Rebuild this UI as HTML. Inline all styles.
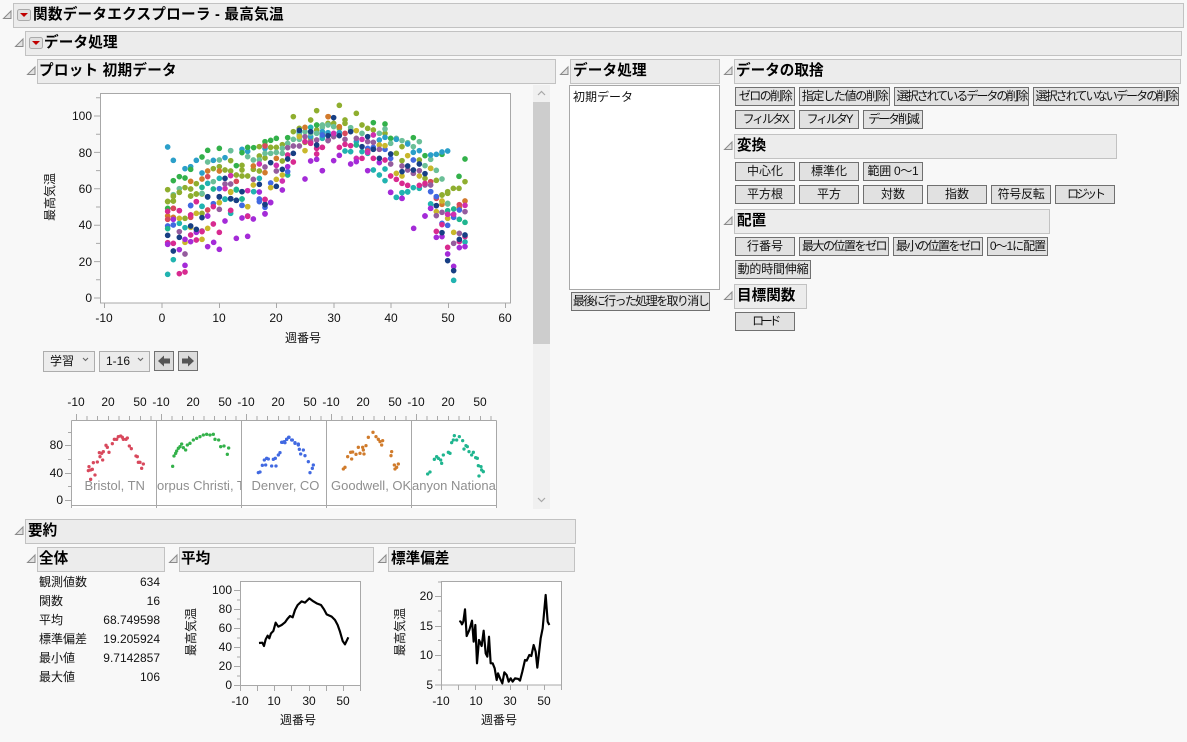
<!DOCTYPE html>
<html lang="ja"><head><meta charset="utf-8"><title>関数データエクスプローラ</title>
<style>
html,body{margin:0;padding:0}
body{width:1187px;height:742px;overflow:hidden;background:#f8f8f8;position:relative;font-family:"Liberation Sans","Noto Sans CJK JP",sans-serif;color:#111}
.h,.b,.x,.tx{position:absolute;box-sizing:border-box;white-space:nowrap}
.h{background:#ececec;border:1px solid #c2c2c2;font-weight:bold;font-size:14.6px;line-height:22px;padding-left:1px;height:25px;color:#000}
.b{background:#e1e1e1;border:1px solid #707070;font-size:12px;line-height:16px;height:19px;text-align:center;overflow:hidden}
.tx{font-size:12px;line-height:16px}
.x{background:#ececec;border:1px solid #adadad;font-size:12px;line-height:18px;height:21px;padding-left:6px}
svg{position:absolute;left:0;top:0}
svg text{font-family:"Liberation Sans","Noto Sans CJK JP",sans-serif;font-size:12px;fill:#111}
svg text.l{font-size:13px;fill:#8f8f8f}
.d{fill:none;stroke-linecap:round;stroke-width:17}
.s{fill:none;stroke-linecap:round;stroke-width:10}
.gl{fill:none;stroke:#a8a8a8;stroke-width:1}
</style></head><body>

<div class="h" style="left:13px;top:3px;width:1171px;padding-left:19px;letter-spacing:.25px">関数データエクスプローラ - 最高気温</div>
<div class="h" style="left:25px;top:31px;width:1157px;padding-left:18px;letter-spacing:.15px">データ処理</div>
<div class="h" style="left:37px;top:59px;width:519px;letter-spacing:.25px">プロット 初期データ</div>
<div class="h" style="left:570px;top:59px;width:150px;padding-left:2px;letter-spacing:.15px">データ処理</div>
<div class="h" style="left:734px;top:59px;width:447px">データの取捨</div>
<div class="h" style="left:734px;top:134px;width:383px;padding-left:2px">変換</div>
<div class="h" style="left:734px;top:209px;width:316px;padding-left:2px">配置</div>
<div class="h" style="left:734px;top:284px;width:73px;padding-left:2px">目標関数</div>
<div class="h" style="left:25px;top:519px;width:551px;padding-left:2px">要約</div>
<div class="h" style="left:37px;top:547px;width:128px">全体</div>
<div class="h" style="left:179px;top:547px;width:195px">平均</div>
<div class="h" style="left:388px;top:547px;width:187px;padding-left:2px">標準偏差</div>

<div class="b" style="left:735px;top:87px;width:60px;letter-spacing:-1.5px">ゼロの削除</div>
<div class="b" style="left:799px;top:87px;width:91px;letter-spacing:-1.3px">指定した値の削除</div>
<div class="b" style="left:894px;top:87px;width:135px;letter-spacing:-2px">選択されているデータの削除</div>
<div class="b" style="left:1033px;top:87px;width:146px;letter-spacing:-1.9px">選択されていないデータの削除</div>
<div class="b" style="left:735px;top:110px;width:60px;letter-spacing:-2.2px">フィルタX</div>
<div class="b" style="left:799px;top:110px;width:60px;letter-spacing:-2.2px">フィルタY</div>
<div class="b" style="left:863px;top:110px;width:60px;letter-spacing:-2.1px">データ削減</div>
<div class="b" style="left:735px;top:162px;width:60px">中心化</div>
<div class="b" style="left:799px;top:162px;width:60px">標準化</div>
<div class="b" style="left:863px;top:162px;width:60px;letter-spacing:-.3px">範囲 0～1</div>
<div class="b" style="left:735px;top:185px;width:60px">平方根</div>
<div class="b" style="left:799px;top:185px;width:60px">平方</div>
<div class="b" style="left:863px;top:185px;width:60px">対数</div>
<div class="b" style="left:927px;top:185px;width:60px">指数</div>
<div class="b" style="left:991px;top:185px;width:60px;letter-spacing:-.3px">符号反転</div>
<div class="b" style="left:1055px;top:185px;width:60px;letter-spacing:-3px">ロジット</div>
<div class="b" style="left:735px;top:237px;width:60px">行番号</div>
<div class="b" style="left:799px;top:237px;width:90px;letter-spacing:-1.5px">最大の位置をゼロ</div>
<div class="b" style="left:893px;top:237px;width:90px;letter-spacing:-1.5px">最小の位置をゼロ</div>
<div class="b" style="left:987px;top:237px;width:61px;letter-spacing:-1px">0～1に配置</div>
<div class="b" style="left:735px;top:260px;width:76px;letter-spacing:-.2px">動的時間伸縮</div>
<div class="b" style="left:735px;top:312px;width:60px;letter-spacing:-3.4px">ロード</div>
<div class="b" style="left:571px;top:292px;width:139px;letter-spacing:-1.6px">最後に行った処理を取り消し</div>

<div class="x" style="left:43px;top:351px;width:52px">学習</div>
<div class="x" style="left:99px;top:351px;width:51px">1-16</div>

<div class="tx" style="left:39px;top:574px">観測値数</div><div class="tx" style="left:100px;width:60px;top:574px;text-align:right">634</div>
<div class="tx" style="left:39px;top:593px">関数</div><div class="tx" style="left:100px;width:60px;top:593px;text-align:right">16</div>
<div class="tx" style="left:39px;top:612px">平均</div><div class="tx" style="left:100px;width:60px;top:612px;text-align:right">68.749598</div>
<div class="tx" style="left:39px;top:631px">標準偏差</div><div class="tx" style="left:100px;width:60px;top:631px;text-align:right">19.205924</div>
<div class="tx" style="left:39px;top:650px">最小値</div><div class="tx" style="left:100px;width:60px;top:650px;text-align:right">9.7142857</div>
<div class="tx" style="left:39px;top:669px">最大値</div><div class="tx" style="left:100px;width:60px;top:669px;text-align:right">106</div>

<svg width="1187" height="742" viewBox="0 0 1187 742">
<g fill="#e2e2e2" stroke="#8a8a8a" stroke-width="1">
<path d="M3.5 18.5H11V11Z"/><path d="M15.5 46.5H23V39Z"/><path d="M27.5 74.5H35V67Z"/>
<path d="M560.5 74.5H568V67Z"/><path d="M724.5 74.5H732V67Z"/><path d="M724.5 149.5H732V142Z"/>
<path d="M724.5 224.5H732V217Z"/><path d="M724.5 299.5H732V292Z"/><path d="M15.5 534.5H23V527Z"/>
<path d="M27.5 562.5H35V555Z"/><path d="M169.5 562.5H177V555Z"/><path d="M378.5 562.5H386V555Z"/>
</g>
<rect x="17.5" y="9.5" width="13" height="11" rx="2" fill="#e0e0e0" stroke="#aaa"/><path d="M20 13h8l-4 4z" fill="#c00000"/>
<rect x="29.5" y="37.5" width="13" height="11" rx="2" fill="#e0e0e0" stroke="#aaa"/><path d="M32 41h8l-4 4z" fill="#c00000"/>

<rect x="533" y="85" width="17" height="424" fill="#f0f0f0"/>
<rect x="533" y="102" width="17" height="242" fill="#cdcdcd"/>
<path d="M538 95l3.5-3.5 3.5 3.5M538 498l3.5 3.5 3.5-3.5" fill="none" stroke="#a8a8a8" stroke-width="1.2"/>

<rect x="569.5" y="85.5" width="150" height="204" fill="#fff" stroke="#a8a8a8"/>
<text x="573" y="101">初期データ</text>

<rect x="100.5" y="93.5" width="410" height="209.5" fill="#fff" stroke="#a8a8a8" stroke-width="1"/>
<path class="gl" d="M94 116h6M94 152.4h6M94 188.8h6M94 225.2h6M94 261.6h6M94 298h6M96 97.8h4M96 134.2h4M96 170.6h4M96 207h4M96 243.4h4M96 279.8h4M104.5 303v5M162 303v5M219.5 303v5M276.5 303v5M334 303v5M391 303v5M448.5 303v5M505.5 303v5"/>
<g text-anchor="end"><text x="92" y="120">100</text><text x="92" y="157">80</text><text x="92" y="193">60</text><text x="92" y="229">40</text><text x="92" y="266">20</text><text x="92" y="302">0</text></g>
<g text-anchor="middle"><text x="104" y="322">-10</text><text x="162" y="322">0</text><text x="219" y="322">10</text><text x="276" y="322">20</text><text x="334" y="322">30</text><text x="391" y="322">40</text><text x="448" y="322">50</text><text x="505" y="322">60</text>
<text x="303" y="342">週番号</text>
<text transform="translate(54,197) rotate(-90)">最高気温</text></g>

<g transform="translate(130,90) scale(.33333)">
<path class="d" stroke="#8fae2f" d="M490 80h0M560 62h0M542 90h0M113 299h0M130 319h0M113 335h0M130 333h0M148 307h0M165 293h0M182 297h0M182 318h0M199 281h0M199 312h0M216 312h0M250 236h0M268 230h0M285 240h0M302 243h0M302 212h0M336 226h0M388 170h0M405 165h0M422 172h0M457 164h0M439 172h0M457 213h0M405 204h0M388 198h0M370 238h0M388 243h0M336 240h0M319 255h0M336 258h0M353 258h0M508 115h0M525 157h0M542 145h0M577 130h0M490 125h0M560 120h0"/>
<path class="d" stroke="#2b9fc9" d="M113 171h0M130 211h0M199 211h0M165 236h0M182 230h0M216 249h0M250 211h0M285 203h0M302 182h0M336 178h0M353 184h0M405 176h0M508 128h0M542 140h0M577 140h0"/>
<path class="d" stroke="#33b14a" d="M233 181h0M268 175h0M216 201h0M336 188h0M353 172h0M371 173h0M405 155h0M422 151h0M439 145h0M473 143h0M560 105h0M130 272h0M148 260h0M165 264h0M319 227h0M182 238h0"/>
<path class="d" stroke="#6abf98" d="M233 216h0M268 210h0M302 182h0M148 296h0M130 314h0M216 310h0M250 275h0M370 210h0M353 200h0M388 210h0M405 190h0M422 190h0M439 187h0M457 190h0M490 148h0M508 135h0M525 125h0M560 130h0M595 102h0M473 160h0M508 148h0M542 130h0M457 175h0"/>
<path class="d" stroke="#d27a2c" d="M182 274h0M216 267h0M233 243h0M268 243h0M439 205h0M525 112h0M595 80h0M370 228h0M405 248h0"/>
<path class="d" stroke="#d8485c" d="M319 274h0M233 260h0M130 355h0M405 168h0"/>
<path class="d" stroke="#21b3b0" d="M216 349h0M233 280h0M268 265h0M285 327h0M302 327h0M371 305h0M388 265h0M336 327h0M542 112h0M577 145h0"/>
<path class="d" stroke="#1fb58f" d="M250 297h0M216 292h0M319 298h0M473 255h0"/>
<path class="d" stroke="#4169e1" d="M182 347h0M268 296h0M336 346h0M388 335h0M422 279h0M473 245h0"/>
<path class="d" stroke="#c9b72b" d="M268 338h0M302 307h0M353 350h0M422 293h0M370 285h0M525 182h0M508 140h0M439 268h0M457 255h0"/>
<path class="d" stroke="#955c9e" d="M285 282h0M302 282h0M370 268h0M405 231h0M439 243h0M473 173h0M490 168h0M508 168h0M525 140h0M560 150h0M595 150h0M542 155h0"/>
<path class="d" stroke="#d02fb0" d="M285 296h0M302 257h0M353 302h0M457 273h0M388 222h0M439 226h0M577 172h0"/>
<path class="d" stroke="#d82a90" d="M199 335h0M268 320h0M302 362h0M405 328h0M490 216h0M473 195h0M542 160h0M560 192h0M525 155h0M560 175h0"/>
<path class="d" stroke="#a42bd8" d="M233 378h0M353 378h0M388 306h0M405 372h0M422 338h0M457 300h0M473 230h0M525 267h0M542 213h0M560 208h0M577 242h0M148 362h0M182 375h0"/>
<path class="d" stroke="#173f84" d="M285 265h0M233 321h0M268 321h0M302 326h0M319 331h0M336 305h0M388 283h0M439 289h0M422 218h0M457 238h0M473 207h0M490 190h0M508 121h0M542 125h0M560 165h0M405 343h0M595 135h0"/>
</g>
<g transform="translate(130,190) scale(.33333)">
<path class="d" stroke="#8fae2f" d="M113 34h0M130 18h0M130 33h0M165 85h0M216 70h0M148 7h0M182 18h0M199 12h0"/>
<path class="d" stroke="#33b14a" d="M113 55h0"/>
<path class="d" stroke="#d27a2c" d="M113 78h0M130 82h0"/>
<path class="d" stroke="#d8485c" d="M130 55h0M233 60h0M113 88h0M182 82h0"/>
<path class="d" stroke="#4169e1" d="M182 46h0M250 41h0M336 46h0M388 27h0M405 52h0M130 105h0M113 108h0"/>
<path class="d" stroke="#21b3b0" d="M216 49h0M285 28h0M371 5h0M148 100h0M165 113h0M130 209h0M113 253h0M302 70h0"/>
<path class="d" stroke="#1fb58f" d="M336 27h0M319 0h0M113 116h0"/>
<path class="d" stroke="#c9b72b" d="M199 70h0M268 38h0M353 50h0M148 85h0M233 115h0M216 148h0M165 157h0M302 5h0M182 112h0"/>
<path class="d" stroke="#955c9e" d="M268 58h0M148 125h0M165 192h0M216 123h0"/>
<path class="d" stroke="#d82a90" d="M113 64h0M148 62h0M182 75h0M199 35h0M302 61h0M353 79h0M405 29h0M250 102h0M268 127h0M182 135h0M216 125h0M199 150h0M113 158h0M130 160h0M148 251h0M165 246h0M250 50h0"/>
<path class="d" stroke="#a42bd8" d="M130 88h0M233 78h0M285 93h0M336 84h0M370 87h0M405 71h0M422 37h0M319 145h0M353 139h0M233 170h0M268 178h0M251 157h0M148 179h0M165 226h0M182 155h0M113 163h0M165 148h0M199 127h0"/>
<path class="d" stroke="#173f84" d="M216 83h0M268 20h0M302 26h0M319 31h0M336 5h0M405 44h0M233 20h0M182 108h0M199 118h0M113 136h0M148 142h0M130 183h0"/>
</g>
<g transform="translate(320,90) scale(.33333)">
<path class="d" stroke="#8fae2f" d="M58 46h0M109 70h0M75 90h0M24 100h0M41 100h0M58 115h0M75 100h0M92 120h0M126 105h0M143 115h0M160 120h0M195 130h0M246 170h0M229 190h0M298 210h0M246 212h0M332 235h0M349 271h0M315 265h0M366 315h0M383 305h0M400 295h0M417 295h0M435 275h0M383 310h0"/>
<path class="d" stroke="#33b14a" d="M160 98h0M195 102h0M280 143h0M315 197h0M366 193h0M435 207h0M417 259h0M212 145h0"/>
<path class="d" stroke="#6abf98" d="M7 105h0M7 112h0M24 105h0M41 110h0M92 113h0M126 130h0M178 130h0M195 117h0M212 160h0M229 145h0M246 152h0M263 158h0M280 170h0M298 155h0M332 208h0M315 227h0M349 241h0M366 267h0M383 340h0"/>
<path class="d" stroke="#d27a2c" d="M24 80h0M58 110h0"/>
<path class="d" stroke="#2b9fc9" d="M7 125h0M24 128h0M41 135h0M58 128h0M109 155h0M178 150h0M195 142h0M229 148h0M263 162h0M280 187h0M298 182h0M332 195h0M349 193h0M366 186h0M383 183h0"/>
<path class="d" stroke="#4169e1" d="M7 135h0M143 175h0M160 172h0M195 178h0M212 205h0M280 210h0M332 305h0M349 320h0"/>
<path class="d" stroke="#c9b72b" d="M109 122h0M178 165h0M195 167h0M263 197h0M298 258h0M229 250h0M332 235h0M366 335h0M246 258h0"/>
<path class="d" stroke="#21b3b0" d="M75 183h0M92 185h0M126 185h0M143 190h0M160 240h0M178 255h0M195 237h0M195 272h0M229 322h0M246 308h0M263 306h0M280 293h0M298 295h0M332 342h0"/>
<path class="d" stroke="#1fb58f" d="M109 165h0"/>
<path class="d" stroke="#d8485c" d="M75 130h0M143 183h0M332 275h0M349 322h0"/>
<path class="d" stroke="#955c9e" d="M24 152h0M41 140h0M75 148h0M109 145h0M143 155h0M160 157h0M178 178h0M212 222h0M246 228h0M263 240h0M280 250h0M298 242h0M315 285h0M332 285h0"/>
<path class="d" stroke="#d82a90" d="M7 172h0M58 172h0M75 163h0M92 167h0M126 205h0M160 205h0M195 210h0M212 258h0M229 268h0M246 280h0M263 286h0M298 286h0M315 280h0"/>
<path class="d" stroke="#d02fb0" d="M126 148h0M160 135h0M41 130h0M109 205h0M143 187h0"/>
<path class="d" stroke="#a42bd8" d="M41 212h0M58 196h0M92 222h0M109 215h0M143 242h0M7 242h0M178 218h0M212 307h0M246 325h0M315 378h0M332 355h0M383 372h0M400 375h0"/>
<path class="d" stroke="#173f84" d="M41 83h0M92 125h0M24 137h0M58 137h0M143 140h0M126 170h0M160 178h0M178 205h0M212 192h0M263 228h0M246 245h0M280 240h0M298 222h0M315 251h0M349 347h0"/>
</g>
<g transform="translate(320,190) scale(.33333)">
<path class="d" stroke="#8fae2f" d="M366 15h0M383 8h0"/>
<path class="d" stroke="#d27a2c" d="M366 43h0M435 33h0M418 52h0"/>
<path class="d" stroke="#6abf98" d="M383 42h0"/>
<path class="d" stroke="#d8485c" d="M349 25h0M418 44h0"/>
<path class="d" stroke="#1fb58f" d="M418 88h0M435 97h0M383 62h0M401 57h0"/>
<path class="d" stroke="#4169e1" d="M332 5h0M349 20h0M418 60h0M401 82h0M383 106h0M366 100h0"/>
<path class="d" stroke="#c9b72b" d="M366 33h0M349 65h0M383 85h0M401 127h0"/>
<path class="d" stroke="#21b3b0" d="M229 22h0M246 8h0M263 5h0M332 42h0M401 271h0M435 156h0"/>
<path class="d" stroke="#955c9e" d="M366 67h0M349 77h0M435 65h0M418 130h0M401 160h0"/>
<path class="d" stroke="#d82a90" d="M366 104h0M349 124h0M383 172h0M418 155h0M435 140h0"/>
<path class="d" stroke="#d02fb0" d="M435 46h0M383 73h0M401 73h0"/>
<path class="d" stroke="#a42bd8" d="M212 7h0M246 25h0M315 78h0M281 115h0M332 55h0M383 192h0M349 142h0M366 140h0M418 173h0M435 170h0M401 229h0"/>
<path class="d" stroke="#173f84" d="M349 47h0M366 128h0M383 212h0M418 148h0M435 135h0M401 242h0"/>
</g>

<path d="M83 358l2.5 2.5 2.5-2.5M138 358l2.5 2.5 2.5-2.5" fill="none" stroke="#666" stroke-width="1.1"/>
<rect x="154.5" y="351.5" width="19" height="19" fill="#dcdcdc" stroke="#707070"/>
<rect x="178.5" y="351.5" width="19" height="19" fill="#dcdcdc" stroke="#707070"/>
<path d="M158 361l6-5.5v3h6v5h-6v3z" fill="#555"/><path d="M194 361l-6-5.5v3h-6v5h6v3z" fill="#555"/>

<rect x="72" y="421" width="425" height="87" fill="#fff"/>
<path class="gl" d="M71.5 420.5H496.5M71.5 505.5H496.5M71.5 420.5V508M156.5 420.5V508M241.5 420.5V508M326.5 420.5V508M411.5 420.5V508M496.5 420.5V508M65 445.5h6M65 473.5h6M65 500.5h6M68 432.5h3M68 459.5h3M68 486.5h3M76.5 414v6M87 416v4M97.5 416v4M108.5 416v4M119 416v4M129.5 416v4M140.5 416v4M151 416v4M161.5 414v6M172 416v4M182.5 416v4M193.5 416v4M204 416v4M214.5 416v4M225.5 416v4M236 416v4M246.5 414v6M257 416v4M267.5 416v4M278.5 416v4M289 416v4M299.5 416v4M310.5 416v4M321 416v4M331.5 414v6M342 416v4M352.5 416v4M363.5 416v4M374 416v4M384.5 416v4M395.5 416v4M406 416v4M416.5 414v6M427 416v4M437.5 416v4M448.5 416v4M459 416v4M469.5 416v4M480.5 416v4M491 416v4"/>
<g text-anchor="end"><text x="63" y="449">80</text><text x="63" y="477">40</text><text x="63" y="504">0</text></g>
<g text-anchor="middle"><text x="76" y="406">-10</text><text x="108" y="406">20</text><text x="140" y="406">50</text><text x="161" y="406">-10</text><text x="193" y="406">20</text><text x="225" y="406">50</text><text x="246" y="406">-10</text><text x="278" y="406">20</text><text x="310" y="406">50</text><text x="331" y="406">-10</text><text x="363" y="406">20</text><text x="395" y="406">50</text><text x="416" y="406">-10</text><text x="448" y="406">20</text><text x="480" y="406">50</text></g>
<g transform="translate(0,340) scale(.33333)">
<path class="s" stroke="#d8485c" d="M265 392h0M272 390h0M277 388h0M267 380h0M280 368h0M292 366h0M285 405h0M272 418h0M298 338h0M305 340h0M300 350h0M310 335h0M308 360h0M318 316h0M322 322h0M327 337h0M337 311h0M343 298h0M350 298h0M355 290h0M362 288h0M367 292h0M370 298h0M378 298h0M382 294h0M388 318h0M394 326h0M408 348h0M412 350h0M415 367h0M420 367h0M430 372h0M425 385h0"/>
<path class="s" stroke="#33b14a" d="M518 379h0M522 348h0M527 340h0M530 333h0M540 320h0M545 312h0M550 323h0M557 330h0M562 315h0M570 310h0M580 300h0M590 295h0M600 290h0M610 285h0M620 283h0M630 285h0M640 283h0M645 298h0M656 300h0M662 320h0M672 318h0M686 324h0M682 343h0M535 325h0"/>
<path class="s" stroke="#4169e1" d="M775 398h0M780 396h0M787 376h0M793 360h0M800 355h0M797 375h0M805 357h0M820 358h0M815 378h0M828 378h0M826 355h0M835 345h0M840 338h0M848 307h0M855 308h0M860 298h0M866 292h0M875 300h0M885 310h0M895 315h0"/>
</g>
<g transform="translate(280,390) scale(.33333)">
<path class="s" stroke="#4169e1" d="M5 157h0M13 155h0M20 148h0M27 142h0M37 150h0M45 158h0M55 162h0M58 178h0M70 180h0M62 192h0M75 197h0M85 215h0M100 225h0M97 235h0M90 248h0"/>
<path class="s" stroke="#d07b2b" d="M190 237h0M195 232h0M203 200h0M212 187h0M218 186h0M215 207h0M228 193h0M235 172h0M248 172h0M240 190h0M252 192h0M250 180h0M258 167h0M265 142h0M279 127h0M288 140h0M295 148h0M300 155h0M308 152h0M305 165h0M335 185h0M333 197h0M343 225h0M355 222h0M345 237h0M350 232h0"/>
<path class="s" stroke="#1fb58f" d="M443 252h0M450 246h0M463 208h0M470 200h0M475 205h0M482 210h0M485 220h0M490 195h0M505 187h0M510 190h0M515 158h0M520 150h0M523 137h0M530 150h0M538 140h0M548 152h0M558 167h0M562 170h0M552 177h0M567 185h0M575 195h0M580 187h0M587 203h0M592 205h0M595 227h0M603 230h0M605 240h0M610 245h0M597 258h0"/>
</g>
<defs>
<clipPath id="p2"><rect x="157" y="470" width="84" height="30"/></clipPath>
<clipPath id="p5"><rect x="412" y="470" width="84" height="30"/></clipPath>
</defs>
<text class="l" x="84.5" y="490">Bristol, TN</text>
<text class="l" x="147.6" y="490" clip-path="url(#p2)">Corpus Christi, TX</text>
<text class="l" x="251.5" y="490">Denver, CO</text>
<text class="l" x="331" y="490">Goodwell, OK</text>
<text class="l" x="402.6" y="490" clip-path="url(#p5)">Canyon National Park</text>

<rect x="240.5" y="581.5" width="120" height="104" fill="#fff" stroke="#a8a8a8"/>
<path class="gl" d="M234 590.5h6M234 609.5h6M234 628.5h6M234 647.5h6M234 666.5h6M234 685.5h6M237 600h3M237 619h3M237 638h3M237 657h3M237 676h3M240.5 686v5M257.5 686v5M274.5 686v5M291.5 686v5M309.5 686v5M326.5 686v5M343.5 686v5M360.5 686v5"/>
<g text-anchor="end"><text x="232" y="594">100</text><text x="232" y="613">80</text><text x="232" y="632">60</text><text x="232" y="651">40</text><text x="232" y="670">20</text><text x="232" y="689">0</text></g>
<g text-anchor="middle"><text x="240" y="705">-10</text><text x="274" y="705">10</text><text x="309" y="705">30</text><text x="343" y="705">50</text><text x="298" y="724">週番号</text>
<text transform="translate(195,632) rotate(-90)">最高気温</text></g>
<g transform="translate(0,515) scale(.33333)"><path fill="none" stroke="#000" stroke-width="6.5" stroke-linejoin="round" d="M777 384L787 383 792 393 797 373 803 362 808 370 813 355 820 348 827 323 835 335 845 330 855 322 862 312 870 303 878 307 885 285 893 270 905 259 915 263 928 250 940 259 950 265 963 270 972 283 980 298 995 305 1005 315 1013 330 1020 350 1028 378 1035 388 1045 367"/></g>

<rect x="441.5" y="581.5" width="120" height="103.5" fill="#fff" stroke="#a8a8a8"/>
<path class="gl" d="M435 596.5h6M435 626.5h6M435 655.5h6M435 685h6M438 582h3M438 611h3M438 640.5h3M438 670h3M441.5 685v5M458.5 685v5M475.5 685v5M492.5 685v5M510.5 685v5M527.5 685v5M544.5 685v5M561.5 685v5"/>
<g text-anchor="end"><text x="433" y="600">20</text><text x="433" y="630">15</text><text x="433" y="659">10</text><text x="433" y="689">5</text></g>
<g text-anchor="middle"><text x="441" y="705">-10</text><text x="476" y="705">10</text><text x="510" y="705">30</text><text x="544" y="705">50</text><text x="499" y="724">週番号</text>
<text transform="translate(404,632) rotate(-90)">最高気温</text></g>
<g transform="translate(370,540) scale(.33333)"><path fill="none" stroke="#000" stroke-width="6.5" stroke-linejoin="round" d="M268 243L272 245 276 253 280 245 285 208 290 288 298 270 306 242 311 305 316 255 321 370 327 300 335 318 341 272 347 340 352 350 357 290 362 370 368 370 374 385 380 420 384 400 390 415 397 430 403 397 410 405 416 425 422 415 428 425 435 415 445 417 450 422 457 395 465 360 470 362 478 345 484 348 491 315 497 335 502 383 512 295 518 265 527 165 533 245 538 255"/></g>
</svg>
</body></html>
